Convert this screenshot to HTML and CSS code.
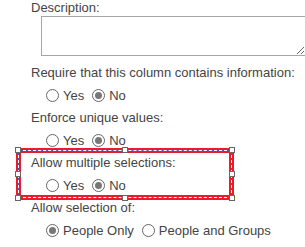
FILE: index.html
```html
<!DOCTYPE html>
<html lang="en">
<head>
    <meta charset="UTF-8">
    <title>Column settings</title>
    <link rel="stylesheet" href="styles.css">
</head>
<body>
    <div class="form">
        <div class="field-label first">Description:</div>
        <textarea class="desc"></textarea>

        <div class="field-label">Require that this column contains information:</div>
        <div class="choices">
            <span class="choice"><span class="radio"></span>Yes</span>
            <span class="choice"><span class="radio checked"></span>No</span>
        </div>

        <div class="field-label">Enforce unique values:</div>
        <div class="choices">
            <span class="choice"><span class="radio"></span>Yes</span>
            <span class="choice"><span class="radio checked"></span>No</span>
        </div>

        <div class="field-label">Allow multiple selections:</div>
        <div class="choices">
            <span class="choice"><span class="radio"></span>Yes</span>
            <span class="choice"><span class="radio checked"></span>No</span>
        </div>

        <div class="field-label">Allow selection of:</div>
        <div class="choices">
            <span class="choice"><span class="radio checked"></span>People Only</span>
            <span class="choice"><span class="radio"></span>People and Groups</span>
        </div>

        <!-- highlight drawn over the "Allow multiple selections" block -->
        <div class="selection">
            <span class="handle h-tl"></span>
            <span class="handle h-tm"></span>
            <span class="handle h-tr"></span>
            <span class="handle h-ml"></span>
            <span class="handle h-mr"></span>
            <span class="handle h-bl"></span>
            <span class="handle h-bm"></span>
            <span class="handle h-br"></span>
        </div>
    </div>
</body>
</html>
```

FILE: styles.css
```css
* {
    margin: 0;
    padding: 0;
    box-sizing: border-box;
}

html, body {
    overflow: hidden;
}

body {
    font-family: 'Liberation Sans', Arial, sans-serif;
    font-size: 13px;
    color: #444;
    background: #fff;
}

.form {
    position: relative;
    padding-left: 31px;
}

.field-label {
    line-height: 23px;
    height: 23px;
    white-space: nowrap;
}

.field-label.first {
    line-height: 16px;
    height: 16px;
}

.desc {
    display: block;
    margin-left: 10px;
    width: 265px;
    height: 40px;
    border: 1px solid #a6a6a6;
    resize: both;
    margin-bottom: 5px;
}

.choices {
    display: flex;
    gap: 8px;
    padding-left: 15px;
    height: 22px;
    align-items: center;
    white-space: nowrap;
}

.choice {
    display: flex;
    align-items: center;
    gap: 4px;
}

.radio {
    width: 13px;
    height: 13px;
    border: 1px solid #666;
    border-radius: 50%;
    display: inline-flex;
    align-items: center;
    justify-content: center;
}

.radio.checked::after {
    content: "";
    width: 7px;
    height: 7px;
    border-radius: 50%;
    background: #777;
}

.selection {
    position: absolute;
    left: 16px;
    top: 148px;
    width: 218px;
    height: 52px;
    border: 5px solid #e81c2b;
}

.selection::before,
.selection::after {
    content: "";
    position: absolute;
    inset: -3px;
}

.selection::before {
    border: 1px solid #3b5bc9;
}

.selection::after {
    border: 1px dashed #fff;
}

.handle {
    position: absolute;
    width: 6px;
    height: 6px;
    background: #fff;
    border: 1px solid #666;
    z-index: 1;
}

.h-tl { left: -6px; top: -6px; }
.h-tm { left: calc(50% - 3px); top: -6px; }
.h-tr { right: -6px; top: -6px; }
.h-ml { left: -6px; top: calc(50% - 3px); }
.h-mr { right: -6px; top: calc(50% - 3px); }
.h-bl { left: -6px; bottom: -6px; }
.h-bm { left: calc(50% - 3px); bottom: -6px; }
.h-br { right: -6px; bottom: -6px; }
```
